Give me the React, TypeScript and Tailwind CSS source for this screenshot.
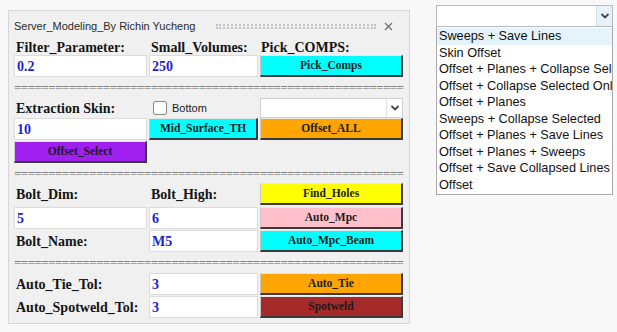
import React from "react";

const serif = { fontFamily: '"Liberation Serif", "Times New Roman", serif' };
const sans = { fontFamily: '"Liberation Sans", Arial, sans-serif' };

const btnBase =
  "h-[22px] flex items-center justify-center text-[11.5px] font-bold text-[#1c1c1c] border-t border-l border-r-2 border-b-2 border-t-[#e6e6e6] border-l-[#c8c8c8] border-r-[#3a3a3a] border-b-[#3a3a3a]";

function Btn({ label, color }: { label: string; color: string }) {
  return (
    <div className={`${btnBase} ${color}`} style={serif}>
      {label}
    </div>
  );
}

function Field({ value }: { value: string }) {
  return (
    <div
      className="h-[22px] bg-white border border-[#dcdcdc] flex items-center pl-[2px] text-[14px] font-bold text-[#1f1fd0]"
      style={serif}
    >
      {value}
    </div>
  );
}

function Label({ text }: { text: string }) {
  return (
    <div className="h-[22px] flex items-center pl-[2px] text-[14px] font-bold text-[#141414] whitespace-nowrap" style={serif}>
      {text}
    </div>
  );
}

function Sep({ h }: { h: string }) {
  return (
    <div className={`${h} flex items-center`}>
      <div
        className="whitespace-nowrap text-[13px] leading-none text-[#6a6a6a] tracking-[-0.5px]"
        style={serif}
      >
        {"=".repeat(57)}
      </div>
    </div>
  );
}

function Chevron() {
  return (
    <svg width="10" height="8" viewBox="0 0 10 8">
      <path d="M1.5 2 L5 5.5 L8.5 2" fill="none" stroke="#444" strokeWidth="1.8" />
    </svg>
  );
}

const grid = "grid grid-cols-[133px_109px_143px] gap-x-[2px]";

const items = [
  "Sweeps + Save Lines",
  "Skin Offset",
  "Offset + Planes + Collapse Selected",
  "Offset + Collapse Selected Only",
  "Offset + Planes",
  "Sweeps + Collapse Selected",
  "Offset + Planes + Save Lines",
  "Offset + Planes + Sweeps",
  "Offset + Save Collapsed Lines",
  "Offset",
];

export default function App() {
  return (
    <div className="w-[617px] h-[332px] bg-[#f8f8f8] flex items-start overflow-hidden">
      {/* Panel */}
      <div className="ml-[8px] mt-[10px] w-[402px] h-[314px] bg-[#f0f0f0] border border-[#d6d6d6] pl-[5px] pr-[6px] flex flex-col">
        {/* title */}
        <div className="h-[26px] pt-[4px] flex items-center" style={sans}>
          <span className="text-[11px] text-[#2a2a2a] whitespace-nowrap">Server_Modeling_By Richin Yucheng</span>
          <div className="ml-[21px] w-[160px] h-[5px] border-y-2 border-dotted border-[#c2c2c2]" />
          <svg width="9" height="9" viewBox="0 0 9 9" className="ml-[8px]">
            <path d="M1 1 L8 8 M8 1 L1 8" stroke="#707070" strokeWidth="1.3" />
          </svg>
        </div>
        {/* labels row */}
        <div className={`${grid} h-[18px] items-center`}>
          <div className="pl-[2px] text-[14px] font-bold text-[#141414] whitespace-nowrap" style={serif}>Filter_Parameter:</div>
          <div className="pl-[2px] text-[14px] font-bold text-[#141414] whitespace-nowrap" style={serif}>Small_Volumes:</div>
          <div className="pl-[1px] text-[14px] font-bold text-[#141414] whitespace-nowrap" style={serif}>Pick_COMPS:</div>
        </div>
        <div className={grid}>
          <Field value="0.2" />
          <Field value="250" />
          <Btn label="Pick_Comps" color="bg-[#00ffff]" />
        </div>
        <Sep h="h-[20px]" />
        {/* Extraction row */}
        <div className={`${grid} h-[21px] items-center`}>
          <Label text="Extraction Skin:" />
          <div className="flex items-center pl-[4px]" style={sans}>
            <div className="w-[14px] h-[14px] bg-white border border-[#8a8a8a] rounded-[2px]" />
            <span className="ml-[5px] text-[11px] text-[#222]">Bottom</span>
          </div>
          <div className="h-[20px] bg-white border border-[#cfcfcf] flex">
            <div className="flex-1" />
            <div className="w-[16px] border-l border-[#e2e2e2] flex items-center justify-center">
              <Chevron />
            </div>
          </div>
        </div>
        <div className={`${grid}`}>
          <Field value="10" />
          <Btn label="Mid_Surface_TH" color="bg-[#00ffff]" />
          <Btn label="Offset_ALL" color="bg-[#ffa500]" />
        </div>
        <div className={`${grid} mt-[1px]`}>
          <Btn label="Offset_Select" color="bg-[#a020f0]" />
        </div>
        <Sep h="h-[20px]" />
        <div className={grid}>
          <Label text="Bolt_Dim:" />
          <Label text="Bolt_High:" />
          <Btn label="Find_Holes" color="bg-[#ffff00]" />
        </div>
        <div className={`${grid} mt-[2px]`}>
          <Field value="5" />
          <Field value="6" />
          <Btn label="Auto_Mpc" color="bg-[#ffc0cb]" />
        </div>
        <div className={`${grid} mt-[1px]`}>
          <Label text="Bolt_Name:" />
          <Field value="M5" />
          <Btn label="Auto_Mpc_Beam" color="bg-[#00ffff]" />
        </div>
        <Sep h="h-[21px]" />
        <div className={grid}>
          <Label text="Auto_Tie_Tol:" />
          <Field value="3" />
          <Btn label="Auto_Tie" color="bg-[#ffa500]" />
        </div>
        <div className={`${grid} mt-[1px]`}>
          <Label text="Auto_Spotweld_Tol:" />
          <Field value="3" />
          <Btn label="Spotweld" color="bg-[#a52a2a]" />
        </div>
      </div>

      {/* Dropdown */}
      <div className="ml-[26px] mt-[5px] w-[177px] flex flex-col" style={sans}>
        <div className="h-[22px] bg-white border border-[#b9b9b9] flex">
          <div className="flex-1" />
          <div className="w-[16px] bg-[#e5f1fb] border-l border-[#cfe0ee] flex items-center justify-center">
            <Chevron />
          </div>
        </div>
        <div className="bg-white border border-t-0 border-[#a9a9a9] pt-[1px] pb-[1px] overflow-hidden">
          {items.map((it, i) => (
            <div
              key={it}
              className={`h-[16.5px] leading-[16.5px] pl-[2px] text-[12.7px] text-[#111] whitespace-nowrap overflow-hidden ${
                i === 0 ? "bg-[#e5f3fb]" : ""
              }`}
            >
              {it}
            </div>
          ))}
        </div>
      </div>
    </div>
  );
}
